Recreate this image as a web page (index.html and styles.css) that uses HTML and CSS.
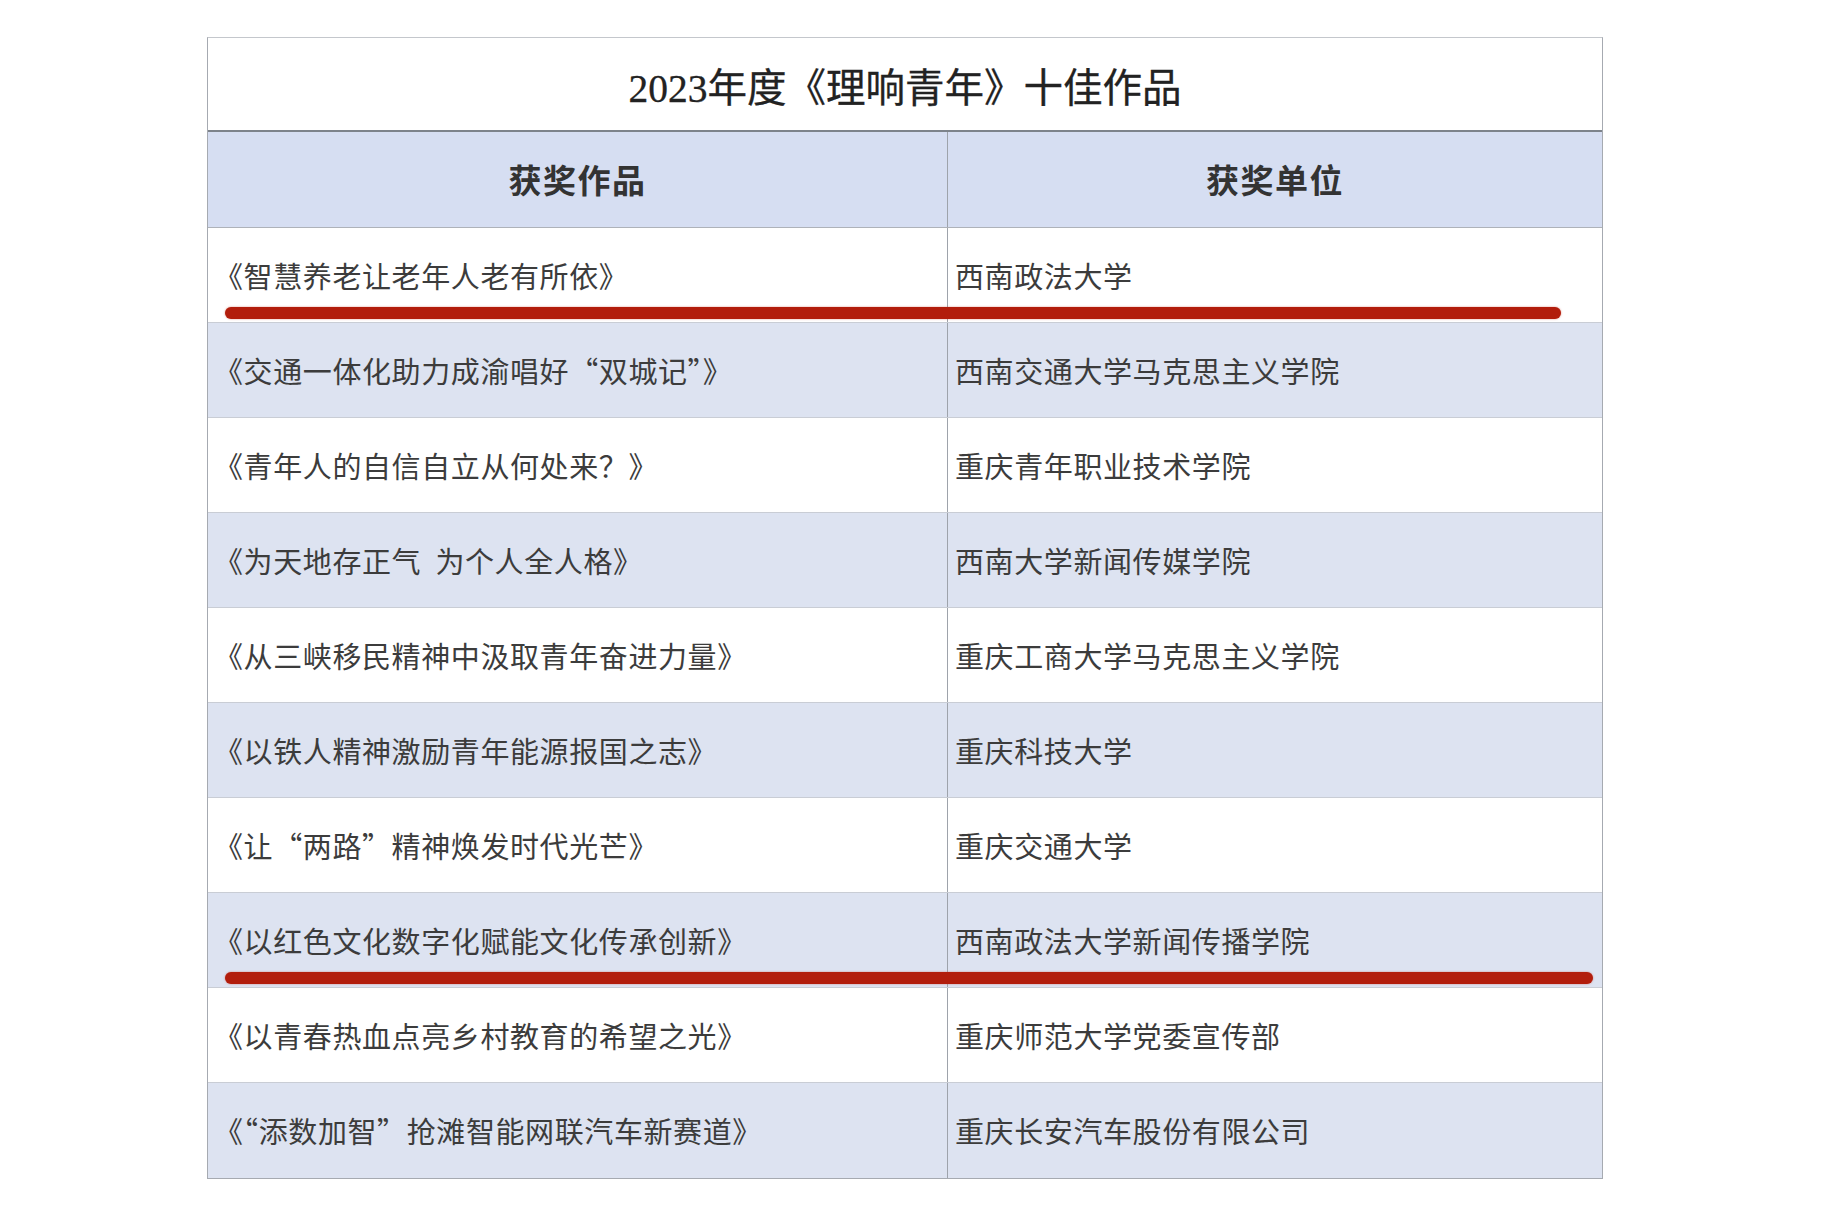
FILE: index.html
```html
<!DOCTYPE html>
<html lang="zh-CN">
<head>
<meta charset="utf-8">
<title>2023年度《理响青年》十佳作品</title>
<link rel="stylesheet" href="styles.css">
</head>
<body>
<div class="page">
  <div class="board">
    <div class="title">2023年度《理响青年》十佳作品</div>
    <div class="row head">
      <div class="cell">获奖作品</div>
      <div class="cell">获奖单位</div>
    </div>
    <div class="row">
      <div class="cell">《智慧养老让老年人老有所依》</div>
      <div class="cell unit">西南政法大学</div>
      <span class="mark mark-a"></span>
    </div>
    <div class="row alt">
      <div class="cell">《交通一体化助力成渝唱好“双城记”》</div>
      <div class="cell unit">西南交通大学马克思主义学院</div>
    </div>
    <div class="row">
      <div class="cell">《青年人的自信自立从何处来？》</div>
      <div class="cell unit">重庆青年职业技术学院</div>
    </div>
    <div class="row alt">
      <div class="cell">《为天地存正气&nbsp;&nbsp;为个人全人格》</div>
      <div class="cell unit">西南大学新闻传媒学院</div>
    </div>
    <div class="row">
      <div class="cell">《从三峡移民精神中汲取青年奋进力量》</div>
      <div class="cell unit">重庆工商大学马克思主义学院</div>
    </div>
    <div class="row alt">
      <div class="cell">《以铁人精神激励青年能源报国之志》</div>
      <div class="cell unit">重庆科技大学</div>
    </div>
    <div class="row">
      <div class="cell">《让“两路”精神焕发时代光芒》</div>
      <div class="cell unit">重庆交通大学</div>
    </div>
    <div class="row alt">
      <div class="cell">《以红色文化数字化赋能文化传承创新》</div>
      <div class="cell unit">西南政法大学新闻传播学院</div>
      <span class="mark mark-b"></span>
    </div>
    <div class="row">
      <div class="cell">《以青春热血点亮乡村教育的希望之光》</div>
      <div class="cell unit">重庆师范大学党委宣传部</div>
    </div>
    <div class="row alt last">
      <div class="cell">《“添数加智”抢滩智能网联汽车新赛道》</div>
      <div class="cell unit">重庆长安汽车股份有限公司</div>
    </div>
  </div>
</div>
</body>
</html>
```
FILE: styles.css
```css
* { box-sizing: border-box; }
html, body { margin: 0; padding: 0; background: #ffffff; }
body {
  font-family: "Noto Sans CJK SC", "Noto Sans", sans-serif;
  color: #3a3a3a;
}
.page {
  padding: 37px 0 0 207px;
}
.board {
  width: 1396px;
  border: 1px solid #a6aab1;
  border-top-color: #c4c7cc;
}
.title {
  height: 94px;
  display: flex;
  align-items: center;
  justify-content: center;
  font-family: "Liberation Serif", "Noto Sans CJK SC", serif;
  font-size: 39.5px;
  color: #222222;
  border-bottom: 2px solid #7d838b;
  -webkit-text-stroke: 0.3px #222222;
}
.row {
  position: relative;
  display: grid;
  grid-template-columns: 739px 1fr;
  height: 95px;
  border-bottom: 1px solid #c9cdd5;
  background: #ffffff;
}
.row.alt { background: #dde3f1; }
.row.last { border-bottom: none; }
.row.head {
  height: 96px;
  background: #d6def2;
  border-bottom: 1px solid #aeb2b9;
}
.cell {
  display: flex;
  align-items: center;
  padding-left: 6px;
  font-size: 29px;
  line-height: 1;
  letter-spacing: 0.6px;
  color: #3c3c3c;
}
.cell + .cell {
  border-left: 1px solid #9ea3ab;
}
.cell.unit { padding-left: 7px; }
.head .cell {
  justify-content: center;
  padding-left: 0;
  font-size: 33px;
  font-weight: 700;
  letter-spacing: 1.5px;
  color: #333333;
}
.mark {
  position: absolute;
  left: 17px;
  bottom: 3px;
  height: 12px;
  border-radius: 6px;
  background: #b21d0c;
  box-shadow: 0 0 2px rgba(200, 60, 40, 0.6);
}
.mark-a { width: 1336px; }
.mark-b { width: 1368px; }
```
